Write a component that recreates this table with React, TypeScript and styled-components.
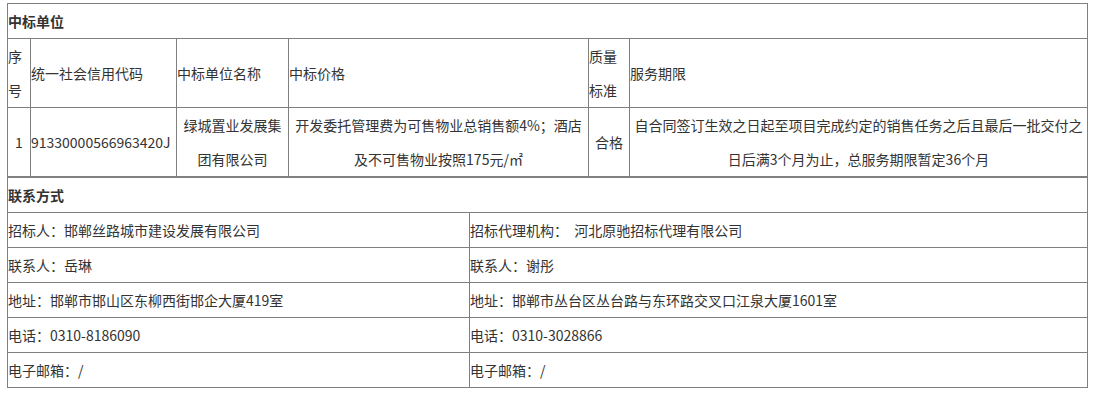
import React from 'react';
import styled, { createGlobalStyle } from 'styled-components';

const GlobalStyle = createGlobalStyle`
  body {
    margin: 0;
    background: #fff;
    font-family: "Noto Sans CJK SC", "Noto Sans", sans-serif;
    color: #333;
  }
`;

const Page = styled.div`
  padding: 3px 0 0 7px;
`;

const Table = styled.table`
  width: 1080px;
  table-layout: fixed;
  border-collapse: collapse;
  font-size: 14px;
  line-height: 34px;
`;

const Cell = styled.td<{ $center?: boolean; $bold?: boolean }>`
  border: 1px solid #808080;
  padding: 0;
  vertical-align: middle;
  text-align: ${(p) => (p.$center ? 'center' : 'left')};
  font-weight: ${(p) => (p.$bold ? 'bold' : 'normal')};
  overflow: visible;
`;

type Winner = {
  no: number;
  code: string;
  name: string;
  price: string;
  quality: string;
  term: string;
};

const winners: Winner[] = [
  {
    no: 1,
    code: '91330000566963420J',
    name: '绿城置业发展集团有限公司',
    price: '开发委托管理费为可售物业总销售额4%；酒店及不可售物业按照175元/㎡',
    quality: '合格',
    term: '自合同签订生效之日起至项目完成约定的销售任务之后且最后一批交付之日后满3个月为止，总服务期限暂定36个月',
  },
];

const contacts: [string, string][] = [
  ['招标人：邯郸丝路城市建设发展有限公司', '招标代理机构：\u00a0\u00a0河北原驰招标代理有限公司'],
  ['联系人：岳琳', '联系人：谢彤'],
  ['地址：邯郸市邯山区东柳西街邯企大厦419室', '地址：邯郸市丛台区丛台路与东环路交叉口江泉大厦1601室'],
  ['电话：0310-8186090', '电话：0310-3028866'],
  ['电子邮箱：/', '电子邮箱：/'],
];

export default function App() {
  return (
    <Page>
      <GlobalStyle />
      <Table>
        <colgroup>
          <col style={{ width: 23 }} />
          <col style={{ width: 146 }} />
          <col style={{ width: 112 }} />
          <col style={{ width: 300 }} />
          <col style={{ width: 41 }} />
          <col style={{ width: 458 }} />
        </colgroup>
        <tbody>
          <tr>
            <Cell colSpan={6} $bold>中标单位</Cell>
          </tr>
          <tr>
            <Cell>序号</Cell>
            <Cell>统一社会信用代码</Cell>
            <Cell>中标单位名称</Cell>
            <Cell>中标价格</Cell>
            <Cell>质量标准</Cell>
            <Cell>服务期限</Cell>
          </tr>
          {winners.map((w) => (
            <tr key={w.no}>
              <Cell $center>{w.no}</Cell>
              <Cell>{w.code}</Cell>
              <Cell $center>{w.name}</Cell>
              <Cell $center>{w.price}</Cell>
              <Cell $center>{w.quality}</Cell>
              <Cell $center>{w.term}</Cell>
            </tr>
          ))}
        </tbody>
      </Table>
      <Table>
        <colgroup>
          <col style={{ width: 462 }} />
          <col style={{ width: 618 }} />
        </colgroup>
        <tbody>
          <tr>
            <Cell colSpan={2} $bold>联系方式</Cell>
          </tr>
          {contacts.map(([left, right]) => (
            <tr key={left}>
              <Cell>{left}</Cell>
              <Cell>{right}</Cell>
            </tr>
          ))}
        </tbody>
      </Table>
    </Page>
  );
}
